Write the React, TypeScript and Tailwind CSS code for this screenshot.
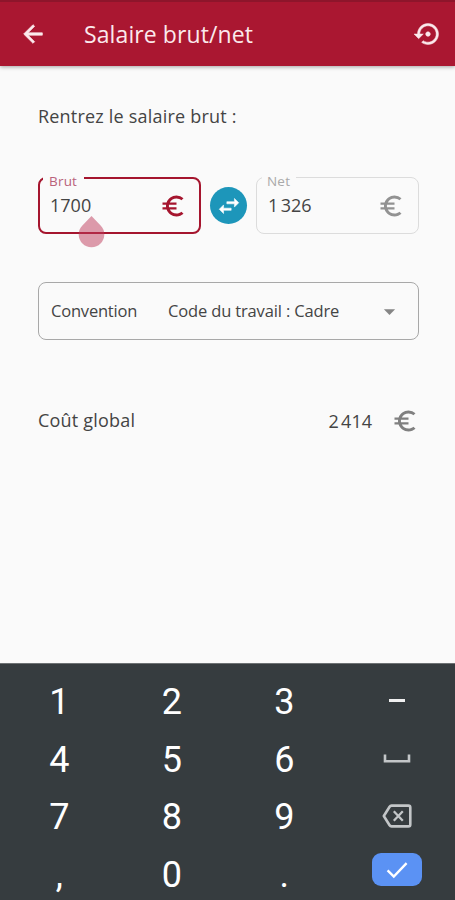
import { useState } from 'react'
import { MdArrowDropDown, MdEuroSymbol } from 'react-icons/md'

const digitKey = 'h-[57.7px] flex items-center justify-center text-[36px] leading-none text-white'

const icons = {
  back: 'M20 11H7.83l5.59-5.59L12 4l-8 8 8 8 1.41-1.41L7.83 13H20v-2z',
  restore: 'M14 12c0-1.1-.9-2-2-2s-2 .9-2 2 .9 2 2 2 2-.9 2-2zm-2-9c-4.97 0-9 4.03-9 9H0l4 4 4-4H5c0-3.87 3.13-7 7-7s7 3.13 7 7-3.13 7-7 7c-1.51 0-2.91-.49-4.06-1.3l-1.42 1.44C8.04 20.3 9.94 21 12 21c4.97 0 9-4.03 9-9s-4.03-9-9-9z',
  swap: 'M6.99 11L3 15l3.99 4v-3H14v-2H6.99v-3zM21 9l-3.99-4v3H10v2h7.01v3L21 9z',
}

// material icon with a slightly heavier outline
function BoldIcon({ name, weight, size = 28 }: { name: keyof typeof icons, weight: number, size?: number }) {
  return <svg width={size} height={size} viewBox="0 0 24 24" fill="currentColor" stroke="currentColor" strokeWidth={weight} className="shrink-0 overflow-visible">
    <path d={icons[name]} />
  </svg>
}

function SpaceIcon() {
  return <svg className="mb-[2px]" width="28" height="10" viewBox="0 0 28 10" fill="none" stroke="#c3c6c8" strokeWidth="2.6">
    <path d="M2 0.5V7.2H26V0.5" />
  </svg>
}

function BackspaceIcon() {
  return <svg className="mb-[2px]" width="30" height="24" viewBox="0 0 30 24" fill="none" stroke="#c3c6c8">
    <path d="M9.5 1.6H26.4Q28.3 1.6 28.3 3.5V20.5Q28.3 22.4 26.4 22.4H9.5Q8.3 22.4 7.6 21.3L1.8 12L7.6 2.7Q8.3 1.6 9.5 1.6Z" strokeWidth="2.6" strokeLinejoin="round" />
    <path d="M11.8 7.3L20.8 16.7M20.8 7.3L11.8 16.7" strokeWidth="2.3" />
  </svg>
}

function CheckIcon() {
  return <svg width="22" height="18" viewBox="0 0 22 18" fill="none" stroke="#fff" strokeWidth="2.4">
    <path d="M1.6 9.4L7.8 15.6L20.6 2.2" />
  </svg>
}

function Handle() {
  return <svg className="absolute left-[38px] top-[37px]" width="27" height="32" viewBox="0 0 27 32">
    <path d="M13.5 0L22.6 9.4A12.8 12.8 0 1 1 4.4 9.4Z" fill="#bd3a5a" fillOpacity="0.5" />
  </svg>
}

function Field({ label, value, active }: { label: string, value: string, active?: boolean }) {
  return <div className={`relative w-[163px] h-[57px] rounded-lg flex items-center justify-between ${active ? 'border-2 border-[#a5152e] pl-[10px] pr-[12px]' : 'border border-[#dcdcdc] pl-[11px] pr-[13px]'}`}>
    <span className={`absolute bg-[#fafafa] text-[13.5px] leading-4 tracking-[0.2px] ${active ? '-top-[6px] left-[3px] pl-[6px] pr-[7px] text-[#b9627b]' : '-top-[5px] left-[5px] pl-[5px] pr-[6px] text-[#a9a9a9]'}`}>{label}</span>
    <span className="text-[18px] leading-6 text-[#444] -mt-[2px]">{value}</span>
    <MdEuroSymbol size={28} className={active ? 'text-[#a5152e]' : 'text-[#929292]'} />
    {active && <Handle />}
  </div>
}

export default function App() {
  const [swapped, setSwapped] = useState(false)

  return (
    <div className="w-[455px] h-[900px] overflow-hidden flex flex-col bg-[#fafafa] font-['Open_Sans','Noto_Sans',sans-serif] text-[#444]">
      <header className="relative h-[66px] shrink-0 bg-[#aa1731] border-t-2 border-[#8e152b] shadow-[0_1px_4px_rgba(0,0,0,0.35)] flex items-center pl-[19px] pr-[13px] text-[#fbe9ec]">
        <BoldIcon name="back" weight={0.6} />
        <h1 className="ml-[37px] flex-1 text-[23px] leading-8 tracking-[0.1px]">Salaire brut/net</h1>
        <BoldIcon name="restore" weight={0.4} />
      </header>

      <main className="flex-1 pl-[38px] pr-[36px] pt-[36px]">
        <p className="text-[18px] leading-7 tracking-[0.2px]">Rentrez le salaire brut :</p>

        <div className="mt-[47px] flex items-center justify-between">
          <Field label="Brut" value="1700" active />
          <button onClick={() => setSwapped(!swapped)} className="size-[37px] shrink-0 rounded-full bg-[#1d96ba] text-white flex items-center justify-center">
            <BoldIcon name="swap" weight={0.5} size={26} />
          </button>
          <Field label="Net" value={'1\u202f326'} />
        </div>

        <div className="mt-[48px] h-[58px] rounded-lg border border-[#a8a8a8] flex items-center pl-[12px] pr-[15px] text-[16.5px] leading-6">
          <span className="w-[117px] tracking-[-0.2px]">Convention</span>
          <span className="flex-1 tracking-[-0.15px]">Code du travail : Cadre</span>
          <MdArrowDropDown size={27} className="text-[#858585]" />
        </div>

        <div className="mt-[67px] flex items-center">
          <span className="flex-1 text-[18px] leading-7 tracking-[0.2px] -mt-[2px]">Coût global</span>
          <span className="text-[18px] leading-7 tracking-[0.9px]">{'2\u202f414'}</span>
          <MdEuroSymbol size={28} className="ml-[19px] text-[#808080]" />
        </div>
      </main>

      <div className="h-[237px] shrink-0 overflow-hidden bg-[#363c3f] border-t border-[#6d7173] pl-[3px] pr-[2px] pt-[9px] grid grid-cols-4 content-start font-[Roboto,sans-serif]">
        <button className={digitKey}>1</button>
        <button className={digitKey}>2</button>
        <button className={digitKey}>3</button>
        <button className={digitKey}><span className="w-4 h-[3px] mb-[3px] bg-[#f0f0f0]" /></button>
        <button className={digitKey}>4</button>
        <button className={digitKey}>5</button>
        <button className={digitKey}>6</button>
        <button className={digitKey}><SpaceIcon /></button>
        <button className={digitKey}>7</button>
        <button className={digitKey}>8</button>
        <button className={digitKey}>9</button>
        <button className={digitKey}><BackspaceIcon /></button>
        <button className={digitKey}>,</button>
        <button className={digitKey}>0</button>
        <button className={digitKey}>.</button>
        <button className={digitKey}>
          <span className="w-[50px] h-[33px] mb-[10px] rounded-[9px] bg-[#5b92f4] flex items-center justify-center">
            <CheckIcon />
          </span>
        </button>
      </div>
    </div>
  )
}
